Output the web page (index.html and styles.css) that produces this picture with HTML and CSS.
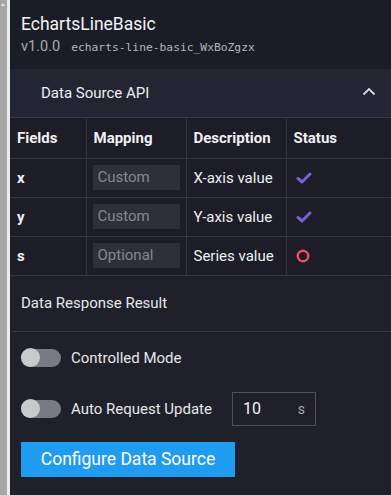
FILE: index.html
```html
<!DOCTYPE html>
<html>
<head>
<meta charset="utf-8">
<link rel="stylesheet" href="styles.css">
</head>
<body>
<div class="app">
  <div class="scrollbar"><div class="scroll-arrow"></div></div>
  <div class="gap"></div>
  <main class="panel">
    <header class="head">
      <div class="title">EchartsLineBasic</div>
      <div class="meta"><span class="ver">v1.0.0</span><span class="id">echarts-line-basic_WxBoZgzx</span></div>
    </header>
    <section class="api">
      <div class="api-head">
        <span>Data Source API</span>
        <svg class="chev" width="14" height="9" viewBox="0 0 14 9"><path d="M1.5 7.5 L7 2 L12.5 7.5" fill="none" stroke="#d8dae0" stroke-width="1.8"/></svg>
      </div>
      <table class="tbl">
        <colgroup><col class="c1"><col class="c2"><col class="c3"><col class="c4"></colgroup>
        <thead>
          <tr><th>Fields</th><th>Mapping</th><th>Description</th><th>Status</th></tr>
        </thead>
        <tbody>
          <tr><td class="f">x</td><td><div class="map">Custom</div></td><td>X-axis value</td><td><svg class="ok" width="16" height="12" viewBox="0 0 16 12"><path d="M2 6.5 L6 10 L14 2" fill="none" stroke="#7a5fd6" stroke-width="3" stroke-linecap="round" stroke-linejoin="round"/></svg></td></tr>
          <tr><td class="f">y</td><td><div class="map">Custom</div></td><td>Y-axis value</td><td><svg class="ok" width="16" height="12" viewBox="0 0 16 12"><path d="M2 6.5 L6 10 L14 2" fill="none" stroke="#7a5fd6" stroke-width="3" stroke-linecap="round" stroke-linejoin="round"/></svg></td></tr>
          <tr><td class="f">s</td><td><div class="map">Optional</div></td><td>Series value</td><td><svg class="ring" width="14" height="14" viewBox="0 0 14 14"><circle cx="7" cy="7" r="5.3" fill="none" stroke="#ee4d6d" stroke-width="2.4"/></svg></td></tr>
        </tbody>
      </table>
    </section>
    <div class="result">Data Response Result</div>
    <div class="row ctrl"><span class="toggle"></span><span>Controlled Mode</span></div>
    <div class="row auto"><span class="toggle"></span><span>Auto Request Update</span>
      <div class="num"><span>10</span><span class="unit">s</span></div>
    </div>
    <button class="btn">Configure Data Source</button>
  </main>
</div>
</body>
</html>
```

FILE: styles.css
```css
html, body { margin: 0; padding: 0; height: 100%; }
body { font-family: Roboto, "Noto Sans", sans-serif; color: #e6e7ea; background: #1f2029; }
.app { display: flex; height: 495px; overflow: hidden; }
.scrollbar { width: 7px; background: #a6a6a6; position: relative; }
.scroll-arrow { position: absolute; left: 1px; top: 3px; width: 0; height: 0; border-left: 2.5px solid transparent; border-right: 2.5px solid transparent; border-bottom: 3px solid #e8e8e8; }
.gap { width: 3px; background: #ececec; }
.panel { flex: 1; background: #1f2029; display: flex; flex-direction: column; }
.head { background: #1b1d26; padding: 13px 0 0 11px; box-sizing: border-box; height: 69px; }
.title { font-size: 17.5px; line-height: 22px; color: #f2f3f5; }
.meta { margin-top: 3px; display: flex; align-items: baseline; gap: 11px; }
.ver { font-size: 14.5px; color: #a9abb2; }
.id { font-family: "DejaVu Sans Mono", "Liberation Mono", monospace; font-size: 11.3px; color: #b3b5bb; }
.api-head { height: 49px; background: #232632; display: flex; align-items: center; justify-content: space-between; padding: 0 15px 0 31px; font-size: 15px; color: #eceef1; border-bottom: 1px solid #363945; box-sizing: border-box; }
.chev { margin-top: -3px; }
.tbl { width: 100%; border-collapse: collapse; background: #1c1d26; font-size: 15px; }
.c1 { width: 76px; } .c2 { width: 100px; } .c3 { width: 100px; }
.tbl th, .tbl td { border: 1px solid #33353f; text-align: left; padding: 0 0 0 7px; height: 38px; color: #eef0f3; }
.tbl thead th { height: 39.5px; }
.tbl tr > :first-child { border-left: none; }
.tbl tr > :last-child { border-right: none; }
.tbl thead th { border-top: none; font-weight: bold; }
.tbl td.f { font-weight: bold; }
.map { width: 87px; height: 25px; background: #2e3039; color: #848791; font-size: 15px; line-height: 25px; padding-left: 5px; box-sizing: border-box; margin-left: -1px; }
.ok { display: block; margin-left: 2px; }
.ring { display: block; margin-left: 2px; }
.result { font-size: 15px; height: 56px; line-height: 54px; border-bottom: 1px solid #363843; margin-left: 2px; padding-left: 9px; box-sizing: border-box; }
.row { display: flex; align-items: center; font-size: 15px; padding-left: 11px; }
.ctrl { height: 52px; }
.auto { height: 50px; }
.toggle { width: 40px; height: 18px; border-radius: 9px; background: #797b82; position: relative; margin-right: 10px; }
.toggle::before { content: ""; position: absolute; left: 0; top: -0.5px; width: 19px; height: 19px; border-radius: 50%; background: #c9cacd; }
.num { margin-left: 20px; width: 84px; height: 34px; border: 1px solid #4d505b; box-sizing: border-box; display: flex; align-items: center; justify-content: space-between; padding: 0 10px 0 10px; font-size: 16px; color: #f2f3f5; }
.unit { font-size: 14px; color: #a9abb2; }
.btn { align-self: flex-start; margin: 8px 0 0 11px; width: 214px; height: 35px; border: none; background: #1f9bf0; color: #ffffff; font-family: Roboto, "Noto Sans", sans-serif; font-size: 17.5px; padding: 0; cursor: pointer; }
```
